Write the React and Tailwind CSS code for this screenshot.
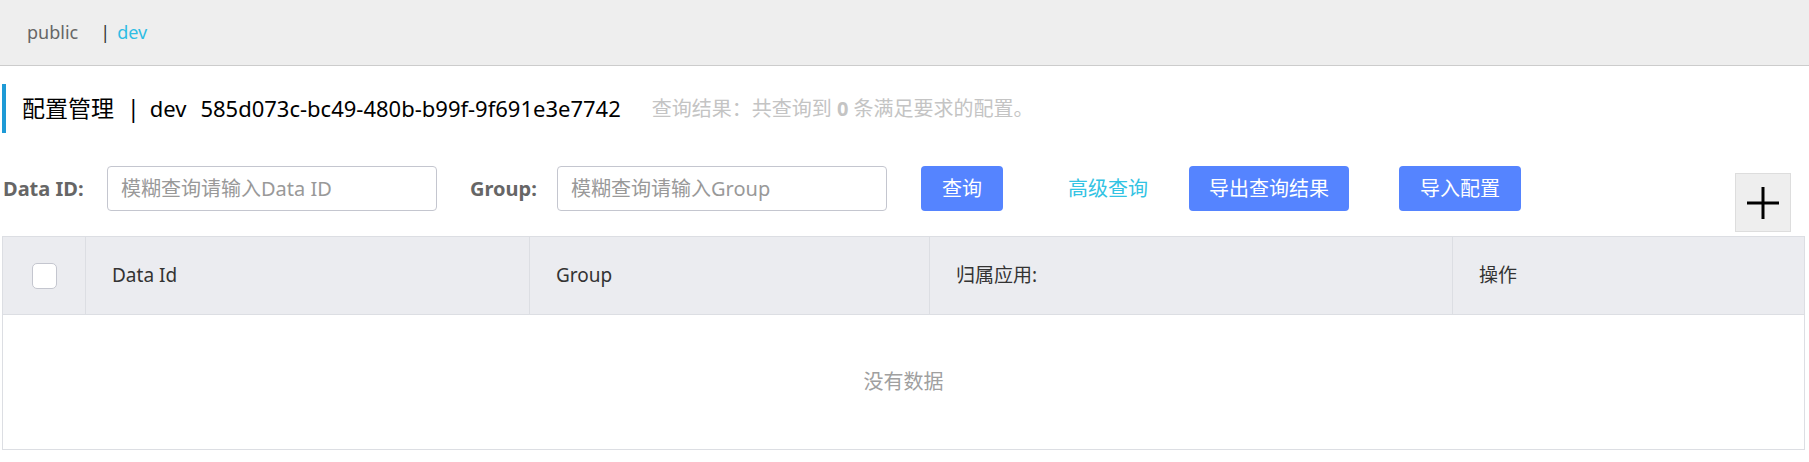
import React from "react";

const columns = ["Data Id", "Group", "归属应用:", "操作"];

const ConfigList = () => {
  return (
    <div className="w-[1809px] h-[462px] bg-white font-['Noto_Sans','Noto_Sans_CJK_SC',sans-serif] overflow-hidden">
      {/* namespace bar */}
      <div className="flex items-center h-[66px] bg-[#eeeeee] border-b border-[#cccccc] pl-[27px] text-[18px]">
        <span className="text-[#666666]">public</span>
        <span className="ml-[22px] text-[#333333]">|</span>
        <span className="ml-[7px] text-[#2fbde4]">dev</span>
      </div>

      <div className="pl-[2px] pr-[4px]">
        {/* title */}
        <div className="mt-[18px] flex items-center h-[49px] border-l-4 border-[#1e9ad6] pl-[16px] text-black">
          <span className="text-[23px]">配置管理</span>
          <span className="ml-[13px] text-[23px]">|</span>
          <span className="ml-[10px] text-[22px]">dev</span>
          <span className="ml-[14px] text-[22px]">585d073c-bc49-480b-b99f-9f691e3e7742</span>
          <span className="ml-[31px] text-[20px] text-[#c4c4c4]">
            查询结果：共查询到 <b className="font-bold">0</b> 条满足要求的配置。
          </span>
        </div>

        {/* search row */}
        <div className="mt-[33px] flex items-start">
          <label className="w-[105px] h-[45px] flex items-center pl-[1px] text-[20px] font-bold text-[#666666]">
            Data ID:
          </label>
          <input
            className="w-[330px] h-[45px] border border-[#c4c6cf] rounded-[4px] px-[13px] text-[20px] text-[#333] placeholder:text-[#999999] outline-none"
            placeholder="模糊查询请输入Data ID"
          />
          <label className="ml-[33px] w-[87px] h-[45px] flex items-center text-[20px] font-bold text-[#666666]">
            Group:
          </label>
          <input
            className="w-[330px] h-[45px] border border-[#c4c6cf] rounded-[4px] px-[13px] text-[20px] text-[#333] placeholder:text-[#999999] outline-none"
            placeholder="模糊查询请输入Group"
          />
          <button className="ml-[34px] w-[82px] h-[45px] rounded-[4px] bg-[#5584ff] text-white text-[20px]">
            查询
          </button>
          <button className="ml-[45px] w-[120px] h-[45px] text-[#33c3e3] text-[20px]">
            高级查询
          </button>
          <button className="ml-[21px] w-[160px] h-[45px] rounded-[4px] bg-[#5584ff] text-white text-[20px]">
            导出查询结果
          </button>
          <button className="ml-[50px] w-[122px] h-[45px] rounded-[4px] bg-[#5584ff] text-white text-[20px]">
            导入配置
          </button>
          <button className="ml-[214px] mt-[7px] w-[56px] h-[59px] bg-[#eeeeee] border border-[#dddddd] flex items-center justify-center">
            <svg width="34" height="34" viewBox="0 0 34 34">
              <path d="M17 1v32M1 17h32" stroke="#000" strokeWidth="3" />
            </svg>
          </button>
        </div>

        {/* table */}
        <div className="mt-[4px] border border-[#dcdee3]">
          <div className="grid grid-cols-[82px_444px_400px_523px_1fr] h-[78px] bg-[#ebecf0] border-b border-[#dcdee3] text-[19px] text-[#333333]">
            <div className="flex items-center justify-center">
              <span className="w-[25px] h-[26px] rounded-[5px] border border-[#c4c6cf] bg-white" />
            </div>
            {columns.map((col) => (
              <div key={col} className="flex items-center pl-[26px] border-l border-[#dcdee3]">
                {col}
              </div>
            ))}
          </div>
          <div className="h-[134px] flex items-center justify-center text-[20px] text-[#a0a0a0]">
            没有数据
          </div>
        </div>
      </div>
    </div>
  );
};

export default function App() {
  return <ConfigList />;
}
